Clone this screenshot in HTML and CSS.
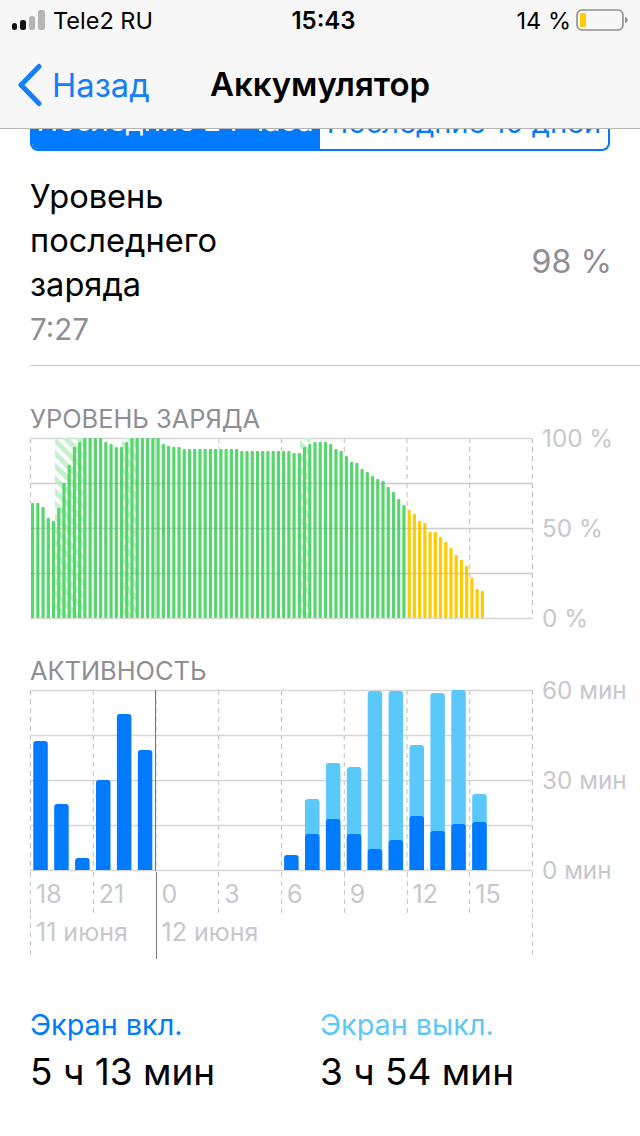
FILE: index.html
```html
<!DOCTYPE html>
<html lang="ru">
<head>
    <meta charset="UTF-8">
    <meta name="viewport" content="width=device-width, initial-scale=1.0">
    <title>Аккумулятор</title>
    <link rel="stylesheet" href="styles.css">
</head>
<body>

    <header class="top">
        <div class="status">
            <div class="status-left">
                <svg class="signal" width="36" height="22" viewBox="0 0 36 22">
                    <rect x="0" y="13" width="5" height="7" rx="2.5" fill="#111"/>
                    <rect x="8" y="10" width="6" height="10" rx="2.5" fill="#111"/>
                    <rect x="17" y="6" width="6" height="14" rx="2.5" fill="#b5b5b5"/>
                    <rect x="26" y="0" width="7" height="20" rx="2.5" fill="#b5b5b5"/>
                </svg>
                <span>Tele2 RU</span>
            </div>
            <div class="clock">15:43</div>
            <div class="status-right">
                <span>14 %</span>
                <svg class="battery" width="52" height="24" viewBox="0 0 52 24">
                    <rect x="1" y="2" width="46" height="20" rx="5" fill="none" stroke="#8e8e8e" stroke-width="1.6"/>
                    <rect x="4" y="5" width="6" height="14" rx="1.5" fill="#ffcc00"/>
                    <path d="M49 9c2 .5 2.6 1.6 2.6 3s-.6 2.500-2.600 3z" fill="#8e8e8e"/>
                </svg>
            </div>
        </div>
        <nav class="nav">
            <a class="back">
                <svg width="26" height="44" viewBox="0 0 26 44">
                    <path d="M22 3.500 4 22l18 18.500" fill="none" stroke="#147efb" stroke-width="5" stroke-linecap="round" stroke-linejoin="round"/>
                </svg>
                <span>Назад</span>
            </a>
            <h1>Аккумулятор</h1>
        </nav>
    </header>

    <main>
        <div class="segments">
            <div class="segment active">Последние 24 часа</div>
            <div class="segment">Последние 10 дней</div>
        </div>

        <div class="last-charge">
            <div>
                <div class="charge-title">Уровень<br>последнего<br>заряда</div>
                <div class="charge-time">7:27</div>
            </div>
            <div class="charge-value">98 %</div>
        </div>

        <section class="block level-block">
            <h2>УРОВЕНЬ ЗАРЯДА</h2>
            <div class="chart-row">
                <svg id="level" class="plot" width="504" height="183" viewBox="30 437 504 183">
                    <defs>
                        <pattern id="hatch" width="9" height="9" patternUnits="userSpaceOnUse" patternTransform="rotate(45)">
                            <rect width="9" height="5" fill="#c4f0cc"/>
                        </pattern>
                    </defs>
                </svg>
                <div class="axis">
                    <span>100 %</span>
                    <span>50 %</span>
                    <span>0 %</span>
                </div>
            </div>
        </section>

        <section class="block activity-block">
            <h2>АКТИВНОСТЬ</h2>
            <div class="chart-row">
                <svg id="activity" class="plot" width="504" height="183" viewBox="30 689 504 183"></svg>
                <div class="axis">
                    <span>60 мин</span>
                    <span>30 мин</span>
                    <span>0 мин</span>
                </div>
            </div>
            <div class="hours">
                <span class="tick">18</span>
                <span class="tick">21</span>
                <span class="tick solid">0</span>
                <span class="tick">3</span>
                <span class="tick">6</span>
                <span class="tick">9</span>
                <span class="tick">12</span>
                <span class="tick">15</span>
            </div>
            <div class="dates">
                <span class="tick">11 июня</span>
                <span class="tick solid">12 июня</span>
            </div>
        </section>

        <div class="totals">
            <div>
                <div class="total-label on">Экран вкл.</div>
                <div class="total-value">5 ч 13 мин</div>
            </div>
            <div>
                <div class="total-label off">Экран выкл.</div>
                <div class="total-value">3 ч 54 мин</div>
            </div>
        </div>
    </main>

    <script src="script.js"></script>
</body>
</html>
```

FILE: styles.css
```css
* {
    box-sizing: border-box;
}
body {
    font-family: Inter, "Liberation Sans", sans-serif;
    margin: 0;
    height: 1136px;
    overflow: hidden;
    background-color: white;
    color: black;
}
.top {
    position: relative;
    z-index: 1;
    height: 129px;
    background-color: #f7f7f7;
    border-bottom: 1px solid #b4b4b4;
}
.status {
    display: grid;
    grid-template-columns: 1fr auto 1fr;
    align-items: center;
    height: 40px;
    padding: 0 12px;
    font-size: 23.5px;
}
.status-left {
    display: flex;
    align-items: center;
    gap: 5px;
}
.signal {
    margin-top: 1px;
}
.clock {
    margin-left: 7px;
    font-size: 24px;
    font-weight: 600;
}
.status-right {
    display: flex;
    align-items: center;
    justify-content: flex-end;
    gap: 5px;
}
.nav {
    display: flex;
    align-items: center;
    justify-content: center;
    position: relative;
    height: 88px;
    padding-bottom: 1px;
}
.back {
    position: absolute;
    left: 17px;
    top: 23px;
    display: flex;
    align-items: center;
    gap: 9px;
    font-size: 32.7px;
    color: #147efb;
}
.nav h1 {
    margin: 0;
    font-size: 33px;
    font-weight: 600;
}
.segments {
    display: grid;
    grid-template-columns: 288px 288px;
    height: 58px;
    margin: -36px 0 0 30px;
    font-size: 29px;
    line-height: 56px;
    text-align: center;
    white-space: nowrap;
    color: #007aff;
    border: 2px solid #007aff;
    border-radius: 8px;
    width: 580px;
    overflow: hidden;
}
.segment.active {
    background-color: #007aff;
    color: white;
    margin: -2px 0 -2px -2px;
}
.last-charge {
    display: flex;
    align-items: center;
    justify-content: space-between;
    height: 215px;
    margin-left: 30px;
    padding: 24px 30px 15px 0;
    border-bottom: 1px solid #cfcfd2;
}
.charge-title {
    font-size: 32.6px;
    line-height: 44px;
}
.charge-time {
    margin-top: 1px;
    font-size: 29.5px;
    line-height: 44px;
    color: #8e8e93;
}
.charge-value {
    margin: 0 -2px 3px 0;
    font-size: 32.2px;
    color: #8e8e93;
}
.block {
    padding-left: 30px;
}
.block h2 {
    margin: 0;
    height: 30px;
    font-size: 25.4px;
    line-height: 30px;
    font-weight: 400;
    color: #8e8e93;
}
.level-block {
    padding-top: 38px;
}
.activity-block {
    padding-top: 36px;
}
.chart-row {
    display: flex;
    align-items: flex-start;
    height: 183px;
    margin-top: 3px;
}
.plot {
    display: block;
    flex: none;
}
.axis {
    display: flex;
    flex-direction: column;
    justify-content: space-between;
    height: 208px;
    margin: -13px 0 0 8px;
    font-size: 24.3px;
    line-height: 28px;
    color: #c7c7cc;
    white-space: nowrap;
}
.hours {
    display: grid;
    grid-template-columns: repeat(8, 62.75px);
    width: 503px;
    height: 42px;
    font-size: 25px;
    line-height: 45px;
    color: #c7c7cc;
}
.dates {
    display: grid;
    grid-template-columns: 125.5px 376.5px 1px;
    width: 503px;
    height: 45px;
    font-size: 25px;
    line-height: 36px;
    color: #c7c7cc;
}
.tick {
    padding-left: 6px;
    background: repeating-linear-gradient(to bottom, #c6c6c6 0, #c6c6c6 5px, transparent 5px, transparent 9px) left top / 1px 100% no-repeat;
}
.tick.solid {
    background: linear-gradient(#77777c, #77777c) left top / 1px 100% no-repeat;
}
.hours,
.dates {
    background: repeating-linear-gradient(to bottom, #c6c6c6 0, #c6c6c6 5px, transparent 5px, transparent 9px) right top / 1px 100% no-repeat;
}
.totals {
    display: grid;
    grid-template-columns: 290px 290px;
    margin: 46px 0 0 30px;
}
.total-label {
    font-size: 28.8px;
    line-height: 40px;
}
.total-label.on {
    color: #007aff;
}
.total-label.off {
    color: #5ac8fa;
}
.total-value {
    padding-top: 2px;
    font-size: 37px;
    line-height: 50px;
}
```

FILE: script.js
```js
const svgNS = 'http://www.w3.org/2000/svg';

function addShape(svg, tag, attrs) {
    const el = document.createElementNS(svgNS, tag);
    for (const key in attrs) {
        el.setAttribute(key, attrs[key]);
    }
    svg.appendChild(el);
}

// stopAt gives the y where a dashed line ends, by default the bottom of the plot
function drawGrid(svg, top, stopAt) {
    for (let i = 0; i <= 8; i++) {
        const x = 30.5 + 62.75 * i;
        const end = stopAt ? stopAt(x) : top + 180;
        addShape(svg, 'line', { x1: x, x2: x, y1: top, y2: end, stroke: '#bdbdbd', 'stroke-dasharray': '5 4' });
    }
    for (let i = 0; i <= 4; i++) {
        const y = top + 0.5 + 45 * i;
        addShape(svg, 'line', { x1: 30, x2: 533, y1: y, y2: y, stroke: '#d6d6d6', 'stroke-width': 1.5 });
    }
}

// top edge of each bar of the battery level, in page pixels
const levelTops = [
    503, 503, 507, 518, 521, 508, 483, 465, 447, 442, 438, 438, 438, 438, 442, 444, 447, 447, 442, 438,
    438, 438, 438, 438, 438, 444, 446, 447, 447, 449, 449, 449, 449, 449, 449, 449, 449, 449, 449, 449,
    451, 451, 451, 451, 451, 451, 451, 451, 451, 451, 453, 453, 447, 444, 442, 442, 442, 444, 449, 451,
    456, 462, 463, 469, 472, 476, 479, 481, 487, 492, 499, 505,
    510, 514, 521, 523, 532, 532, 537, 542, 548, 555, 560, 566, 578, 589, 591
];
const greenCount = 72;

const level = document.getElementById('level');
drawGrid(level, 438, function(x) {
    const top = levelTops[Math.round((x - 31) / 5.23)];
    return top || 618;
});
[[55, 30], [122, 14], [300, 10]].forEach(function(zone) {
    addShape(level, 'rect', { x: zone[0], y: 438, width: zone[1], height: 180, fill: 'url(#hatch)' });
});
levelTops.forEach(function(top, i) {
    addShape(level, 'rect', {
        x: 31 + 5.23 * i,
        y: top,
        width: 3.2,
        height: 618 - top,
        rx: 1,
        fill: i < greenCount ? '#55d76d' : '#ffcc00'
    });
});
// the grid shows faintly through the bars
for (let i = 1; i < 4; i++) {
    addShape(level, 'line', { x1: 30, x2: 533, y1: 438.5 + 45 * i, y2: 438.5 + 45 * i, stroke: 'rgba(90, 90, 90, 0.08)', 'stroke-width': 1.5 });
}
addShape(level, 'line', { x1: 155.5, x2: 155.5, y1: 438, y2: 618, stroke: 'rgba(60, 60, 60, 0.22)' });

// hour slot, top of dark bar (screen on), top of light bar (screen off)
const activityBars = [
    [0, 741], [1, 804], [2, 858], [3, 780], [4, 714], [5, 750],
    [12, 855], [13, 834, 799], [14, 819, 763], [15, 834, 767], [16, 849, 691],
    [17, 840, 691], [18, 816, 745], [19, 831, 693], [20, 824, 690], [21, 822, 794]
];

const activity = document.getElementById('activity');
drawGrid(activity, 690);
addShape(activity, 'line', { x1: 155.5, x2: 155.5, y1: 690, y2: 871, stroke: '#77777c' });
activityBars.forEach(function(bar) {
    const x = 33.3 + 20.9 * bar[0];
    if (bar[2]) {
        addShape(activity, 'path', { d: barPath(x, bar[2]), fill: '#5ac8fa' });
    }
    addShape(activity, 'path', { d: barPath(x, bar[1]), fill: '#007aff' });
});

function barPath(x, top) {
    const w = 14.5;
    const r = 3;
    return `M${x} 870V${top + r}q0-${r} ${r}-${r}h${w - 2 * r}q${r} 0 ${r} ${r}V870z`;
}
```
